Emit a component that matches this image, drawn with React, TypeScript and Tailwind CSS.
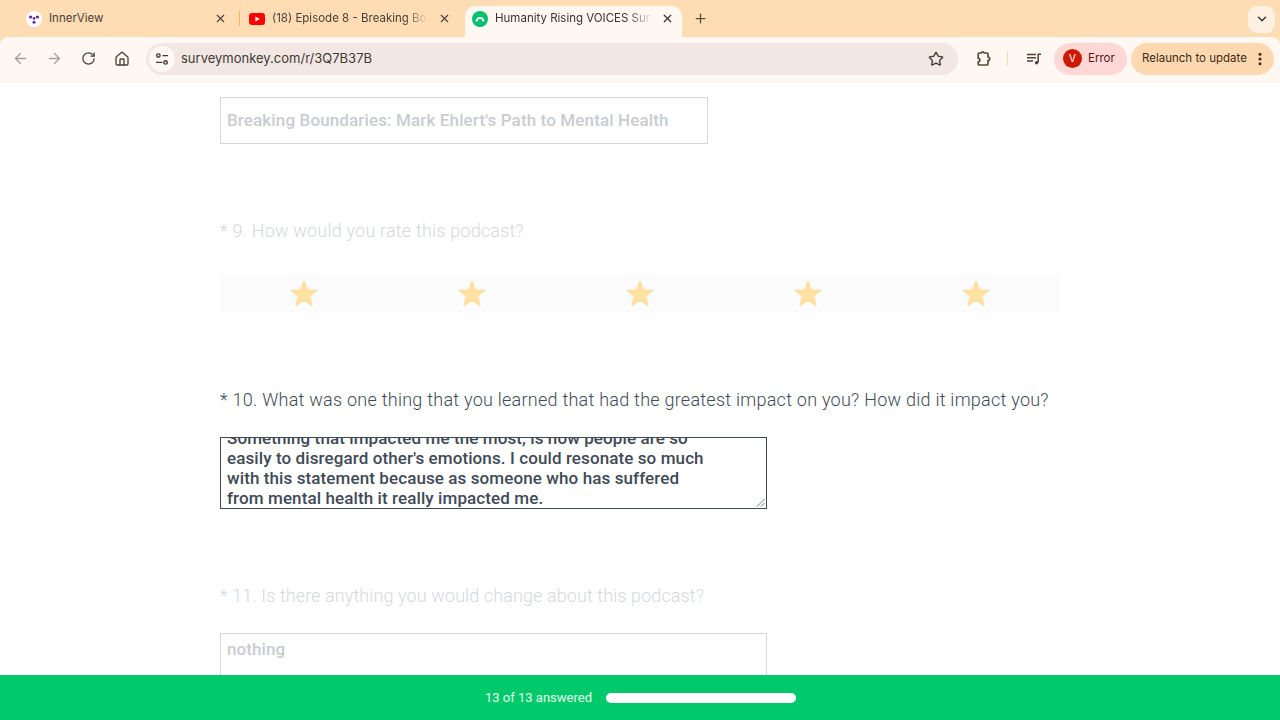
import { ArrowLeft, ArrowRight, ChevronDown, EllipsisVertical, House, Plus, RotateCw, Star, X } from 'lucide-react';

const sans = 'font-["Roboto",sans-serif]';
const ui = 'font-["Inter",sans-serif]';

function InnerViewIcon() {
  return (
    <svg width="16" height="16" viewBox="0 0 16 16">
      <circle cx="8" cy="8" r="8" fill="#fff" />
      <circle cx="4.6" cy="6" r="1.6" fill="#6b21a8" />
      <circle cx="11.4" cy="6" r="1.6" fill="#6b21a8" />
      <circle cx="8" cy="7.4" r="1.3" fill="#6b21a8" />
      <circle cx="8" cy="11.2" r="1.5" fill="#6b21a8" />
    </svg>
  );
}

function YoutubeIcon() {
  return (
    <svg width="16" height="12" viewBox="0 0 16 12">
      <rect width="16" height="12" rx="3" fill="#f00" />
      <path d="M6.4 3.4 10.8 6l-4.4 2.6z" fill="#fff" />
    </svg>
  );
}

function SurveyIcon() {
  return (
    <svg width="16" height="16" viewBox="0 0 16 16">
      <circle cx="8" cy="8" r="8" fill="#00bf6f" />
      <path d="M3.6 10.4a4.4 4.4 0 0 1 8.8 0h-2a2.4 2.4 0 0 0-4.8 0z" fill="#fff" />
    </svg>
  );
}

function SiteControls() {
  return (
    <svg width="14" height="14" viewBox="0 0 14 14" fill="none" stroke="#3f3a36" strokeWidth="1.4">
      <circle cx="3.4" cy="3.6" r="1.7" />
      <path d="M7.5 3.6H13M1 10.4h6.5" />
      <circle cx="10.6" cy="10.4" r="1.7" />
    </svg>
  );
}

function ExtensionIcon() {
  return (
    <svg width="17" height="17" viewBox="0 0 17 17" fill="none" stroke="#5a4a3a" strokeWidth="1.7" strokeLinejoin="round">
      <path d="M5 3h2.2a1.6 1.6 0 0 1 3 0H13a1 1 0 0 1 1 1v3a1.5 1.5 0 0 1 0 3.4V14a1 1 0 0 1-1 1H5.2a1 1 0 0 1-1-1v-2.2a1.7 1.7 0 0 0 0-3.4V4a1 1 0 0 1 .8-1z" />
    </svg>
  );
}

function MediaIcon() {
  return (
    <svg width="16" height="14" viewBox="0 0 16 14" fill="none" stroke="#4e4237" strokeWidth="1.5">
      <path d="M1 2.5h9M1 5.8h9M1 9.1h6" />
      <path d="M12.2 10.4V2.2H15" />
      <circle cx="10.6" cy="10.8" r="1.7" fill="#4e4237" stroke="none" />
    </svg>
  );
}

function Tabs() {
  return (
    <div className={`${ui} flex h-[37px] items-center text-[11.5px] text-[#4a4038]`}>
      <div className="flex w-[239px] items-center pl-[26px] pr-[12px]">
        <InnerViewIcon />
        <span className="ml-[7px] flex-1">InnerView</span>
        <X size={13} strokeWidth={2} className="text-[#4a4038]" />
      </div>
      <div className="h-[15px] w-px bg-[#f5b661]" />
      <div className="flex w-[225px] items-center pl-[9px] pr-[14px]">
        <YoutubeIcon />
        <span className="ml-[7px] flex-1 overflow-hidden whitespace-nowrap [mask-image:linear-gradient(to_right,black_85%,transparent)]">
          (18) Episode 8 - Breaking Boundaries
        </span>
        <X size={13} strokeWidth={2} className="ml-[10px] shrink-0" />
      </div>
      <div className="mt-[6px] flex h-[31px] w-[217px] items-center self-start rounded-t-[10px] bg-[#fff7f2] pb-[6px] pl-[7px] pr-[8px] text-[#3a342f]">
        <SurveyIcon />
        <span className="ml-[7px] flex-1 overflow-hidden whitespace-nowrap [mask-image:linear-gradient(to_right,black_85%,transparent)]">
          Humanity Rising VOICES Survey
        </span>
        <X size={13} strokeWidth={2.4} className="ml-[9px] shrink-0" />
      </div>
      <Plus size={15} strokeWidth={2} className="ml-[11px] text-[#5a4a3a]" />
      <div className="ml-auto mr-[5px] mt-[1px] flex h-[27px] w-[27px] items-center justify-center rounded-[9px] bg-[#fff0e2]">
        <ChevronDown size={14} strokeWidth={2.5} className="text-[#3a342f]" />
      </div>
    </div>
  );
}

function Toolbar() {
  return (
    <div className={`${ui} flex h-[44px] items-center rounded-t-[8px] bg-[#fff7f2] pb-[1px] pl-[12px] pr-[6px]`}>
      <ArrowLeft size={17} strokeWidth={1.8} className="text-[#a89f97]" />
      <ArrowRight size={17} strokeWidth={1.8} className="ml-[17px] text-[#a89f97]" />
      <RotateCw size={15} strokeWidth={2} className="ml-[18px] text-[#4e4237]" />
      <House size={16} strokeWidth={2} className="ml-[18px] text-[#4e4237]" />
      <div className="ml-[16px] flex h-[32px] w-[812px] items-center rounded-full bg-[#f2e7e2] pl-[3px] pr-[14px]">
        <div className="flex h-[26px] w-[26px] items-center justify-center rounded-full bg-[#fff7f2]">
          <SiteControls />
        </div>
        <span className="ml-[6px] flex-1 pt-px text-[13px] text-[#3f3a36]">surveymonkey.com/r/3Q7B37B</span>
        <Star size={16} strokeWidth={2} className="text-[#3f3a36]" />
      </div>
      <span className="ml-[16px]"><ExtensionIcon /></span>
      <div className="ml-[16px] h-[15px] w-px bg-[#fbd9ad]" />
      <span className="ml-[18px]"><MediaIcon /></span>
      <div className="ml-[12px] flex h-[32px] w-[73px] items-center rounded-full bg-[#ffd8d6] pl-[9px] text-[11.5px] text-[#5c1010]">
        <div className="flex h-[19px] w-[19px] items-center justify-center rounded-full bg-[#cc1a00] text-[10px] text-white">V</div>
        <span className="ml-[6px]">Error</span>
      </div>
      <div className="ml-[4px] flex h-[32px] w-[143px] items-center rounded-full bg-[#fed9b0] pl-[11px] text-[11.5px] text-[#3d2a18]">
        <span className="flex-1 whitespace-nowrap">Relaunch to update</span>
        <EllipsisVertical size={16} strokeWidth={2.6} className="mr-[6px]" />
      </div>
    </div>
  );
}

function ResizeGrip() {
  return (
    <svg width="9" height="9" viewBox="0 0 9 9" stroke="#777" className="absolute bottom-px right-px">
      <path d="M8.5 1 1 8.5M8.5 5 5 8.5" />
    </svg>
  );
}

export default function App() {
  return (
    <div className={`${sans} flex h-[720px] w-[1280px] flex-col overflow-hidden bg-white`}>
      <header className="h-[82px] shrink-0 bg-[#fedcb4]">
        <Tabs />
        <Toolbar />
        <div className="h-px bg-[#fbeee3]" />
      </header>

      <main className="min-h-0 flex-1 overflow-hidden pl-[220px] pr-[220px] pt-[15px]">
        <div className="flex h-[47px] w-[488px] items-center whitespace-nowrap border border-[#d5d7da] px-[6px] text-[17px] font-medium tracking-[0.13px] text-[#c9ccd1]">
          Breaking Boundaries: Mark Ehlert's Path to Mental Health
        </div>

        <p className="mt-[75px] h-[24px] text-[18px] font-light leading-[24px] tracking-[0.2px] text-[#d5d8dc]">* 9. How would you rate this podcast?</p>

        <div className="mt-[32px] grid h-[38px] grid-cols-5 bg-[#fbfbfb]">
          {[0, 1, 2, 3, 4].map((i) => (
            <div key={i} className="flex items-center justify-center pb-[2px]">
              <svg width="28" height="27" viewBox="0 0 28 27">
                <path
                  d="M14 2.2 17.3 10.4H26L19.2 16 21.7 24.8 14 19.8 6.3 24.8 8.8 16 2 10.4H10.7z"
                  fill="#fee0a3"
                  stroke="#fee0a3"
                  strokeWidth="2"
                  strokeLinejoin="round"
                />
              </svg>
            </div>
          ))}
        </div>

        <p className="mt-[75px] h-[24px] whitespace-nowrap text-[18px] font-light leading-[24px] tracking-[0.25px] text-[#3f4a56]">
          * 10. What was one thing that you learned that had the greatest impact on you? How did it impact you?
        </p>

        <div className="relative mt-[25px] h-[72px] w-[547px] overflow-hidden border border-[#3f4a56] px-[6px] text-[17px] font-medium leading-[20px] tracking-[0.1px] text-[#3f4a56]">
          <div className="-mt-[10px]">
            <div className="whitespace-nowrap">Something that impacted me the most, is how people are so</div>
            <div className="whitespace-nowrap">easily to disregard other's emotions. I could resonate so much</div>
            <div className="whitespace-nowrap">with this statement because as someone who has suffered</div>
            <div className="whitespace-nowrap">from mental health it really impacted me.</div>
          </div>
          <ResizeGrip />
        </div>

        <p className="mt-[75px] h-[24px] text-[18px] font-light leading-[24px] tracking-[0.1px] text-[#d5d8dc]">* 11. Is there anything you would change about this podcast?</p>

        <div className="mt-[25px] h-[73px] w-[547px] border border-[#d5d7da] px-[6px] pt-[5px] text-[17px] font-medium leading-[20px] tracking-[0.1px] text-[#c9ccd1]">
          nothing
        </div>
      </main>

      <footer className="flex h-[45px] shrink-0 items-center justify-center bg-[#00c96b] pl-[1px]">
        <span className="text-[13px] text-[#e4f9ee]">13 of 13 answered</span>
        <div className="ml-[14px] h-[10px] w-[190px] rounded-full bg-white" />
      </footer>
    </div>
  );
}
